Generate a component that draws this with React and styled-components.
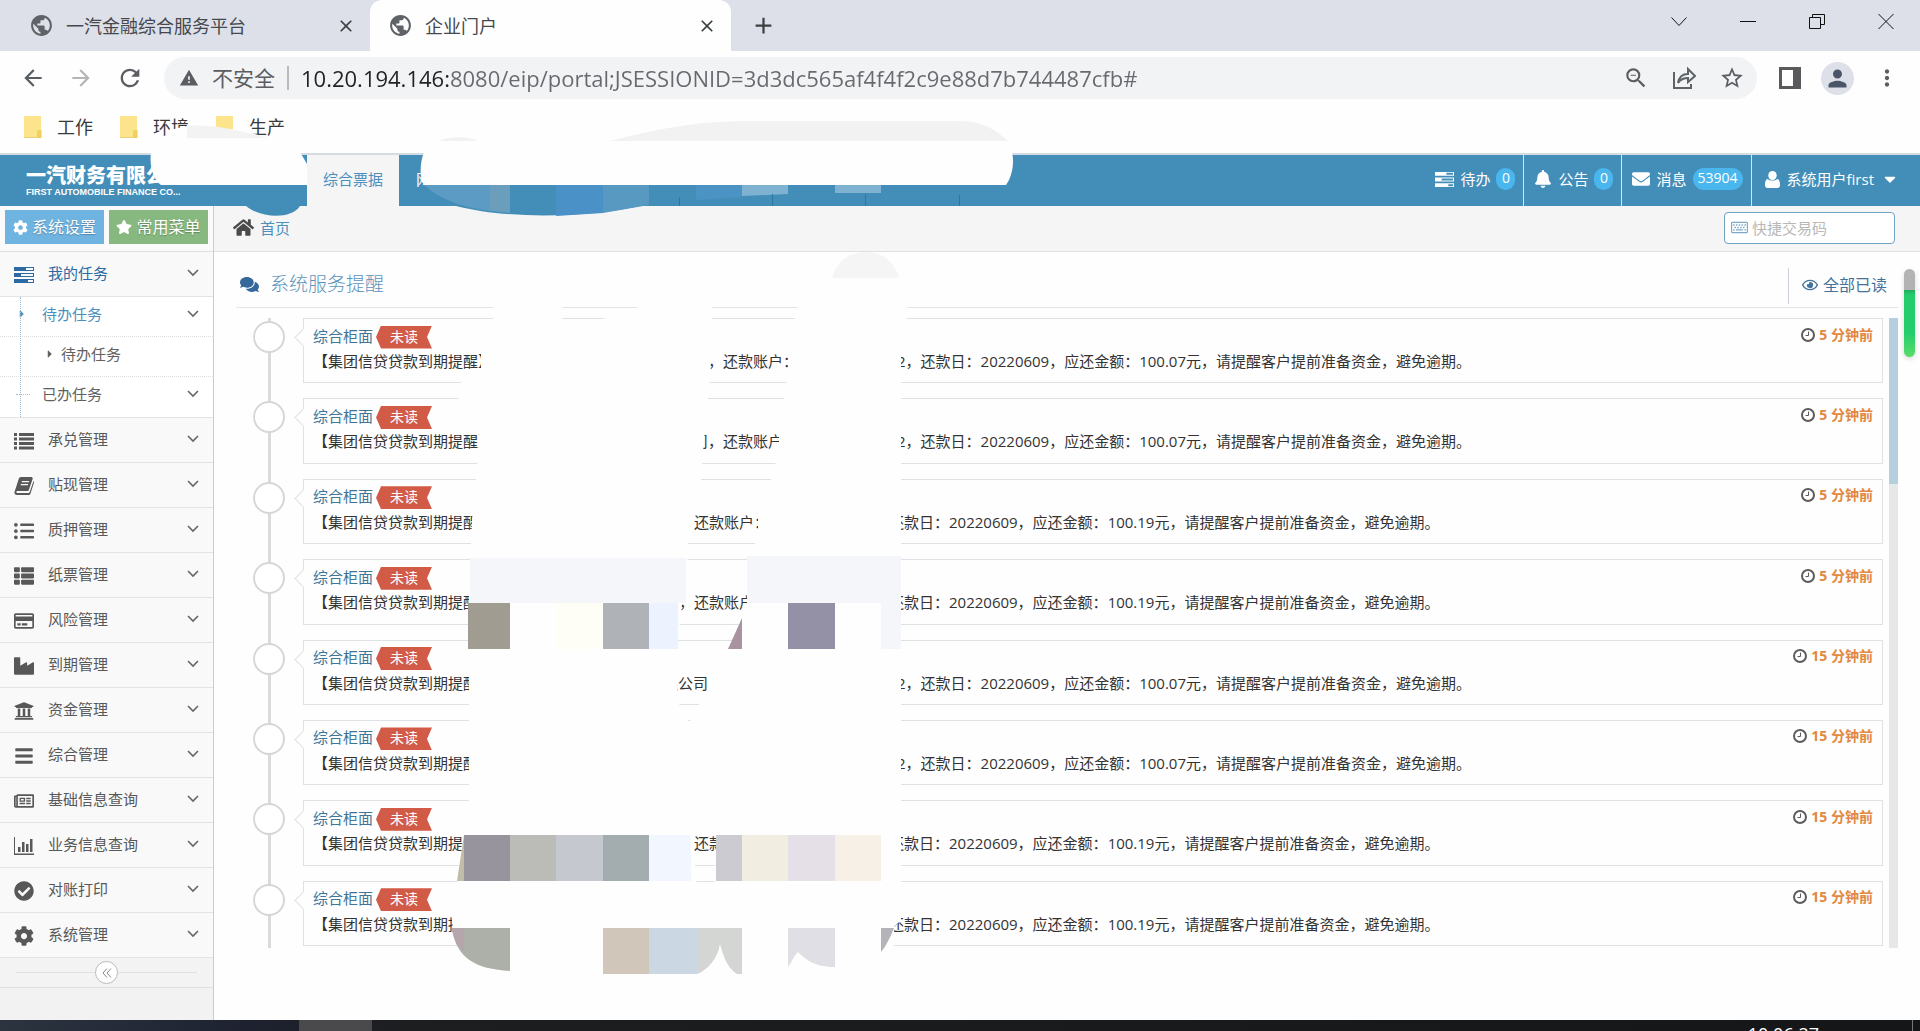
import React from 'react';
import styled, { createGlobalStyle, css } from 'styled-components';
import {
    FaBars, FaBell, FaCaretDown, FaCaretRight, FaCheckCircle, FaCog, FaComments, FaEnvelope,
    FaHome, FaIndustry, FaListUl, FaRegCreditCard, FaRegEye,
    FaRegKeyboard, FaRegNewspaper, FaStar, FaThList, FaUniversity,
} from 'react-icons/fa';
import {
    MdArrowBack, MdArrowForward, MdClose, MdAdd, MdMoreVert, MdPerson, MdPublic, MdRefresh,
    MdStarBorder, MdWarning, MdZoomOut,
} from 'react-icons/md';

const GlobalStyle = createGlobalStyle`
    *, *::before, *::after { box-sizing: border-box; }

    body {
        margin: 0;
        background: #fefefe;
        color: #393939;
        font-family: 'Open Sans', 'Noto Sans CJK SC', sans-serif;
        font-size: 15px;
        line-height: 20px;
    }

    a { color: inherit; text-decoration: none; }
    ul { list-style: none; margin: 0; padding: 0; }
    h1, p { margin: 0; font-weight: 400; }
    svg { display: block; flex-shrink: 0; }

    button {
        border: 0;
        padding: 0;
        background: none;
        color: inherit;
        font: inherit;
    }
`;

const Page = styled.div`
    position: relative;
    display: flex;
    flex-direction: column;
    height: 100vh;
    overflow: hidden;
`;

/* ------------------------------------------------------------ Browser --- */

const TabStrip = styled.div`
    display: flex;
    height: 51px;
    flex-shrink: 0;
    background: #dde0e8;
`;

const Tab = styled.div`
    display: flex;
    align-items: center;
    gap: 12px;
    width: ${props => (props.$active ? 361 : 370)}px;
    padding: 0 14px 0 ${props => (props.$active ? 18 : 29)}px;
    color: #45484d;
    font-size: 18px;
    border-radius: 12px 12px 0 0;
    background: ${props => (props.$active ? '#fefefe' : 'transparent')};

    span { flex: 1; }
    svg { color: #5f6368; }
    button svg { color: #3c4043; }
`;

const NewTab = styled.button`
    margin-left: 19px;
    color: #3c4043;
`;

const WindowButtons = styled.div`
    display: flex;
    align-items: flex-start;
    gap: 53px;
    margin-left: auto;
    padding: 13px 26px 0 0;
`;

const Toolbar = styled.div`
    display: flex;
    align-items: center;
    height: 54px;
    flex-shrink: 0;
    padding: 0 20px;
    color: #5a5d61;
`;

const NavButtons = styled.div`
    display: flex;
    gap: 22px;
    margin-right: 20px;

    button:nth-child(2) { color: #b4b5b7; }
`;

const Omnibox = styled.label`
    display: flex;
    flex: 1;
    align-items: center;
    height: 42px;
    padding: 0 12px 0 15px;
    border-radius: 21px;
    background: #f2f3f5;
    font-size: 22px;
`;

const Insecure = styled.span`
    margin-left: 13px;
    padding-right: 12px;
    border-right: 2px solid #b9bbbe;
    line-height: 24px;
    font-size: 21px;
`;

/* host part dark, rest of the address grey */
const Address = styled.input`
    flex: 1;
    height: 32px;
    margin-left: 12px;
    padding: 0;
    border: 0;
    outline: 0;
    font: inherit;
    background: linear-gradient(90deg, #202124 148px, #66696d 148px);
    background-clip: text;
    -webkit-text-fill-color: transparent;
`;

const OmniActions = styled.span`
    display: flex;
    align-items: center;
    gap: 23px;
`;

const BrowserActions = styled.div`
    display: flex;
    align-items: center;
    gap: 20px;
    margin-left: 22px;
`;

const Avatar = styled.button`
    display: grid;
    place-items: center;
    width: 33px;
    height: 33px;
    border-radius: 50%;
    background: #dde0e8;
    color: #4b5568;
`;

const Bookmarks = styled.nav`
    display: flex;
    gap: 27px;
    height: 50px;
    flex-shrink: 0;
    padding: 11px 24px 0;
    border-bottom: 2px solid #d5dce1;
    font-size: 18px;
    line-height: 22px;

    a {
        display: flex;
        gap: 15px;
    }
`;

const BOOKMARKS = ['工作', '环境', '生产'];

const FolderIcon = () => (
    <svg width="18" height="22" viewBox="0 0 18 22">
        <path d="M0 0h17v14h1v8H0z" fill="#fbe48c" />
        <path d="M14 14h3v8h-4v-7z" fill="#f2cf5e" />
        <path d="M0 21h13v1H0z" fill="#eed074" />
    </svg>
);

const ShareIcon = () => (
    <svg width="24" height="24" viewBox="0 0 24 24" fill="none" stroke="#5f6368" strokeWidth="2">
        <path d="M2 6v16h17v-4" />
        <path d="M6 17c1-6 4-9 10-9V3l7 7-7 6v-4c-5 0-8 2-10 5z" />
    </svg>
);

const SidePanelIcon = () => (
    <svg width="22" height="22" viewBox="0 0 22 22">
        <path d="M0 0h22v22H0zM3 3v16h11V3z" fill="#5a5a5c" fillRule="evenodd" />
    </svg>
);

const WinIcon = ({ d }) => (
    <svg width="16" height="16" viewBox="0 0 16 16" fill="none" stroke="#111" strokeWidth="1">
        <path d={d} />
    </svg>
);

const Browser = () => (
    <>
        <TabStrip>
            <Tab>
                <MdPublic size={25} />
                <span>一汽金融综合服务平台</span>
                <button aria-label="关闭"><MdClose size={20} /></button>
            </Tab>
            <Tab $active>
                <MdPublic size={25} />
                <span>企业门户</span>
                <button aria-label="关闭"><MdClose size={20} /></button>
            </Tab>
            <NewTab aria-label="新标签页"><MdAdd size={27} /></NewTab>
            <WindowButtons>
                <button aria-label="标签搜索"><WinIcon d="M.5 4.5l7.500 8 7.500-8" /></button>
                <button aria-label="最小化"><WinIcon d="M0 8.500h16" /></button>
                <button aria-label="还原"><WinIcon d="M.5 4.500h11v11H.5zM3.500 4V1.500h12v10H12" /></button>
                <button aria-label="关闭窗口"><WinIcon d="M.5 1l15 15M15.500 1l-15 15" /></button>
            </WindowButtons>
        </TabStrip>
        <Toolbar>
            <NavButtons>
                <button aria-label="后退"><MdArrowBack size={26} /></button>
                <button aria-label="前进"><MdArrowForward size={26} /></button>
                <button aria-label="刷新"><MdRefresh size={28} /></button>
            </NavButtons>
            <Omnibox>
                <MdWarning size={20} />
                <Insecure>不安全</Insecure>
                <Address
                    aria-label="地址"
                    defaultValue="10.20.194.146:8080/eip/portal;JSESSIONID=3d3dc565af4f4f2c9e88d7b744487cfb#"
                />
                <OmniActions>
                    <MdZoomOut size={26} />
                    <ShareIcon />
                    <MdStarBorder size={26} />
                </OmniActions>
            </Omnibox>
            <BrowserActions>
                <button aria-label="侧边栏"><SidePanelIcon /></button>
                <Avatar aria-label="用户"><MdPerson size={27} /></Avatar>
                <button aria-label="菜单"><MdMoreVert size={26} /></button>
            </BrowserActions>
        </Toolbar>
        <Bookmarks>
            {BOOKMARKS.map(name => (
                <a key={name} href="#"><FolderIcon />{name}</a>
            ))}
        </Bookmarks>
    </>
);

/* ------------------------------------------------------------- Header --- */

const Header = styled.header`
    display: flex;
    height: 51px;
    flex-shrink: 0;
    background: #438eb9;
    color: #fff;
`;

const Brand = styled.div`
    width: 307px;
    padding: 10px 0 0 26px;
    white-space: nowrap;

    strong {
        display: block;
        font-size: 20px;
        font-weight: 900;
        line-height: 22px;
    }

    small {
        display: block;
        font: bold 9px/10px 'Liberation Sans', sans-serif;
    }
`;

const ModuleTab = styled.a`
    padding: ${props => (props.$active ? '0 16px' : '0 17px')};
    line-height: 49px;
    background: ${props => (props.$active ? '#f5f5f5' : 'transparent')};
    color: ${props => (props.$active ? '#4c8fbd' : '#fff')};
`;

const HeaderLinks = styled.nav`
    display: flex;
    margin-left: auto;
    padding-right: 13px;
`;

const HeaderLink = styled.a`
    display: flex;
    align-items: center;
    gap: 6px;
    padding: 0 8px 3px 10px;
    border-left: 1px solid #d4e5ef;

    &:first-child { border-left: 0; }

    ${props => props.$user && css`
        gap: 7px;
        padding-left: 13px;
    `}
`;

const Count = styled.span`
    min-width: 19px;
    padding: 0 5px 2px;
    border-radius: 11px;
    background: #4ab6ee;
    line-height: 20px;
    text-align: center;
    font-size: 14px;
`;

const TasksIcon = ({ size = 20 }) => (
    <svg width={size} height={size} viewBox="0 0 20 20" fill="currentColor" fillRule="evenodd">
        <path d="M0 2h20v4H0zM12 3v2h7V3zM0 8h20v4H0zM7 9v2h12V9zM0 14h20v4H0zM14 15v2h5v-2z" />
    </svg>
);

const UserIcon = () => (
    <svg width="15" height="17" viewBox="0 0 15 17" fill="currentColor">
        <ellipse cx="7.500" cy="4.500" rx="4.200" ry="4.500" />
        <path d="M3 8c1 2 8 2 9 0 3 0 3 5 3 6 0 2-1 3-2.500 3h-10C1 17 0 16 0 14c0-1 0-6 3-6z" />
    </svg>
);

const TopHeader = () => (
    <Header>
        <Brand>
            <strong>一汽财务有限公司</strong>
            <small>FIRST AUTOMOBILE FINANCE CO...</small>
        </Brand>
        <ModuleTab href="#" $active>综合票据</ModuleTab>
        <ModuleTab href="#">网</ModuleTab>
        <HeaderLinks>
            <HeaderLink href="#"><TasksIcon size={19} />待办<Count>0</Count></HeaderLink>
            <HeaderLink href="#"><FaBell size={18} />公告<Count>0</Count></HeaderLink>
            <HeaderLink href="#"><FaEnvelope size={18} />消息<Count>53904</Count></HeaderLink>
            <HeaderLink href="#" $user><UserIcon />系统用户first<FaCaretDown size={18} /></HeaderLink>
        </HeaderLinks>
    </Header>
);

/* ------------------------------------------------------------ Sidebar --- */

const Body = styled.div`
    display: flex;
    flex: 1;
    min-height: 0;
`;

const Sidebar = styled.aside`
    width: 214px;
    flex-shrink: 0;
    border-right: 1px solid #ccc;
    background: #f2f2f2;
`;

const Shortcuts = styled.div`
    display: flex;
    gap: 5px;
    height: 46px;
    padding: 4px 5px 7px;
    border-bottom: 1px solid #e0e0e0;
    background: #fafafa;
`;

const Shortcut = styled.button`
    display: flex;
    flex: 1;
    align-items: center;
    justify-content: center;
    gap: 4px;
    font-size: 16px;
    white-space: nowrap;
    color: #fff;
    background: ${props => props.$tone};
    text-shadow: 0 1px 1px rgba(0, 0, 0, 0.25);
`;

const MenuLink = styled.a`
    display: flex;
    align-items: center;
    gap: 14px;
    height: 45px;
    padding: 0 14px 3px 14px;
    border-bottom: 1px solid #e3e3e3;
    background: #f9f9f9;
    color: ${props => (props.$open ? '#2b6aa3' : '#585858')};

    span { flex: 1; }
    > svg:first-child { margin-top: 4px; }
`;

const SubMenu = styled.ul`
    position: relative;
    background: #fff;
    border-bottom: 1px solid #e3e3e3;

    &::before {
        content: '';
        position: absolute;
        left: 20px;
        top: 0;
        bottom: 0;
        border-left: 1px dotted #9dbdd6;
    }
`;

const SubLink = styled.a`
    display: flex;
    align-items: center;
    height: 40px;
    padding: 0 14px 6px ${props => (props.$deep ? 44 : 16)}px;
    border-bottom: ${props => (props.$last ? '0' : '1px dotted #dcdcdc')};
    color: ${props => (props.$open ? '#4c8fbd' : '#616161')};

    i {
        display: block;
        width: ${props => (props.$deep ? 17 : 26)}px;
    }

    span { flex: 1; }
`;

const Dash = styled.b`
    display: block;
    width: 14px;
    border-top: 1px dotted #9dbdd6;
`;

const Collapse = styled.div`
    display: flex;
    align-items: center;
    height: 30px;
    padding: 0 16px;
    border-bottom: 1px solid #e0e0e0;
    background: #f3f3f3;

    &::before, &::after {
        content: '';
        flex: 1;
        border-top: 1px solid #e0e0e0;
    }

    button {
        display: grid;
        place-items: center;
        width: 23px;
        height: 23px;
        border: 1px solid #bbb;
        border-radius: 50%;
        background: #fff;
    }
`;

const Chevron = () => (
    <svg width="12" height="8" viewBox="0 0 12 8" fill="none" stroke="#666" strokeWidth="1.600">
        <path d="M1 1l5 5 5-5" />
    </svg>
);

const ListIcon = () => (
    <svg width="20" height="20" viewBox="0 0 20 20" fill="currentColor">
        <path d="M0 2h3v3H0zM5 2h15v3H5zM0 6.500h3v3H0zM5 6.500h15v3H5zM0 11h3v3H0zM5 11h15v3H5zM0 15.500h3v3H0zM5 15.500h15v3H5z" />
    </svg>
);

const BookIcon = () => (
    <svg width="20" height="20" viewBox="0 0 20 20" fill="currentColor" fillRule="evenodd">
        <path d="M7 1h10c1.500 0 2 1 1.600 2L15 13.500c-.3 1-1 1.500-2 1.500H3.500c-1.500 0-1.500 2 0 2H14c1 0 1.500-.5 1.800-1.300L19.500 5c.7.600.5 1.500.3 2.300L16.500 17.500c-.4 1-1 1.500-2 1.500H3c-2 0-3-1.500-2.500-3L4.700 3C5 1.700 6 1 7 1zM8 5l-.4 1.300h7.200L15.200 5zM7 8l-.4 1.300h7.200L14.200 8z" />
    </svg>
);

const ChartIcon = () => (
    <svg width="20" height="20" viewBox="0 0 20 20" fill="currentColor">
        <path d="M0 1h1v16.500h19v1.500H0zM4 11h2.500v5H4zM8 6h2.500v10H8zM12 8h2.500v8H12zM16 3h2.500v13H16z" />
    </svg>
);

const MENU = [
    ['承兑管理', ListIcon],
    ['贴现管理', BookIcon],
    ['质押管理', FaListUl],
    ['纸票管理', FaThList],
    ['风险管理', FaRegCreditCard],
    ['到期管理', FaIndustry],
    ['资金管理', FaUniversity],
    ['综合管理', FaBars],
    ['基础信息查询', FaRegNewspaper],
    ['业务信息查询', ChartIcon],
    ['对账打印', FaCheckCircle],
    ['系统管理', FaCog],
];

const SideMenu = () => (
    <Sidebar>
        <Shortcuts>
            <Shortcut $tone="#6fb3e0"><FaCog size={15} />系统设置</Shortcut>
            <Shortcut $tone="#87b87f"><FaStar size={16} />常用菜单</Shortcut>
        </Shortcuts>
        <MenuLink href="#" $open><TasksIcon /><span>我的任务</span><Chevron /></MenuLink>
        <SubMenu>
            <li><SubLink href="#" $open><i><FaCaretRight size={12} /></i><span>待办任务</span><Chevron /></SubLink></li>
            <li><SubLink href="#" $deep><i><FaCaretRight size={12} /></i><span>待办任务</span></SubLink></li>
            <li><SubLink href="#" $last><i><Dash /></i><span>已办任务</span><Chevron /></SubLink></li>
        </SubMenu>
        {MENU.map(([label, Icon]) => (
            <MenuLink key={label} href="#"><Icon size={20} /><span>{label}</span><Chevron /></MenuLink>
        ))}
        <Collapse>
            <button aria-label="收起菜单">
                <svg width="10" height="10" viewBox="0 0 10 10" fill="none" stroke="#888">
                    <path d="M5 .5L1 5l4 4.500M9 .5L5 5l4 4.500" />
                </svg>
            </button>
        </Collapse>
    </Sidebar>
);

/* ------------------------------------------------------------ Content --- */

const Main = styled.main`
    display: flex;
    flex: 1;
    flex-direction: column;
    min-width: 0;
`;

const Crumbs = styled.div`
    display: flex;
    align-items: center;
    gap: 6px;
    height: 46px;
    flex-shrink: 0;
    padding: 0 25px 2px 19px;
    border-bottom: 1px solid #e0e0e0;
    background: #f5f5f5;
    color: #4c8fbd;

    > svg { color: #4a4a4a; }
`;

const QuickCode = styled.label`
    display: flex;
    align-items: center;
    gap: 4px;
    width: 171px;
    height: 32px;
    margin-left: auto;
    padding: 0 6px;
    border: 1px solid #6fa3c2;
    border-radius: 4px;
    background: #fff;
    color: #7fa9cb;

    input {
        width: 100%;
        min-width: 0;
        border: 0;
        outline: 0;
        padding: 0;
        font: inherit;
    }

    input::placeholder { color: #b8b8b8; }
`;

const Panel = styled.section`
    display: flex;
    flex: 1;
    flex-direction: column;
    min-height: 0;
    padding: 16px 22px 72px;
`;

const PanelHead = styled.div`
    display: flex;
    align-items: center;
    gap: 11px;
    height: 40px;
    flex-shrink: 0;
    padding: 0 11px 7px 4px;
    border-bottom: 1px solid #e3e5e8;
    color: #35679a;

    h1 {
        font-size: 19px;
        line-height: 24px;
        font-weight: 300;
        color: #5c93bb;
    }

    a {
        display: flex;
        align-items: center;
        gap: 5px;
        height: 36px;
        margin: 0 0 -4px auto;
        padding: 0 0 3px 13px;
        border-left: 1px solid #ccd2d8;
        font-size: 16px;
        color: #44729b;
    }
`;

const Scroller = styled.div`
    display: flex;
    flex: 1;
    gap: 6px;
    min-height: 0;
    margin-top: 10px;
`;

const Track = styled.div`
    width: 9px;
    background: linear-gradient(#b5cfdf 166px, #e7e7e7 166px);
`;

const Timeline = styled.ol`
    display: flex;
    flex: 1;
    flex-direction: column;
    gap: 15px;
    margin: 0;
    padding: 0 0 2px 67px;
    list-style: none;
    background: linear-gradient(#dadada, #dadada) 32px 0 / 3px 100% no-repeat;
`;

const Card = styled.li`
    position: relative;
    flex: 1;
    padding: 6px 9px 0;
    border: 1px solid #dfe2e4;
    background: #fefefe;

    &::before {
        content: '';
        position: absolute;
        left: -51px;
        top: 2px;
        width: 32px;
        height: 32px;
        border: 2px solid #d6d6d6;
        border-radius: 50%;
        background: #fff;
    }

    &::after {
        content: '';
        position: absolute;
        left: -7px;
        top: 12px;
        width: 13px;
        height: 13px;
        border: solid #dfe2e4;
        border-width: 0 0 1px 1px;
        background: #fefefe;
        transform: rotate(45deg);
    }
`;

const CardHead = styled.div`
    display: flex;
    align-items: center;
    gap: 3px;
    height: 24px;

    > a {
        padding-bottom: 3px;
        color: #3f7599;
    }
`;

const Ribbon = styled.span`
    width: 56px;
    height: 23px;
    color: #fff;
    font-size: 14px;
    line-height: 21px;
    text-align: center;
    background: #d15b47;
    clip-path: polygon(0 50%, 5px 0, 100% 0, 51px 50%, 100% 100%, 5px 100%);
`;

const Ago = styled.time`
    display: flex;
    align-items: center;
    gap: 4px;
    margin: -5px 0 0 auto;
    font-size: 14px;
    font-weight: 700;
    color: #e2883f;
`;

const ClockIcon = () => (
    <svg width="14" height="14" viewBox="0 0 14 14" fill="none" stroke="#5c5c5c">
        <circle cx="7" cy="7" r="6" strokeWidth="2" />
        <path d="M7.500 3.500v4H4.500" />
    </svg>
);

const Message = styled.p`
    display: flex;
    height: 24px;
    line-height: 24px;
    white-space: nowrap;
    color: #333;
`;

const Subject = styled.span`
    display: flex;
    justify-content: space-between;
    width: ${props => (props.$short ? 456 : 485)}px;
    margin-right: ${props => (props.$short ? 120 : 99)}px;
`;

const NOTICES = [
    { account: '，还款账户：', amount: '100.07', ago: 5 },
    { account: '司，还款账户：', amount: '100.07', ago: 5 },
    { account: '，还款账户：', amount: '100.19', ago: 5, short: true },
    { account: '，还款账户：', amount: '100.19', ago: 5, short: true },
    { account: '限公司，还款账户：', amount: '100.07', ago: 15 },
    { account: '', amount: '100.07', ago: 15 },
    { account: '，还款账户：', amount: '100.19', ago: 15, short: true },
    { account: '', amount: '100.19', ago: 15, short: true },
];

const Notice = ({ account, amount, ago, short }) => (
    <Card>
        <CardHead>
            <a href="#">综合柜面</a>
            <Ribbon>未读</Ribbon>
            <Ago><ClockIcon />{ago} 分钟前</Ago>
        </CardHead>
        <Message>
            <Subject $short={short}>
                <span>【集团信贷贷款到期提醒】</span>
                <span>{account}</span>
            </Subject>
            {short ? '' : '2，'}还款日：20220609，应还金额：{amount}元，请提醒客户提前准备资金，避免逾期。
        </Message>
    </Card>
);

const Content = () => (
    <Main>
        <Crumbs>
            <FaHome size={21} />
            <a href="#">首页</a>
            <QuickCode>
                <FaRegKeyboard size={17} />
                <input aria-label="快捷交易码" placeholder="快捷交易码" />
            </QuickCode>
        </Crumbs>
        <Panel>
            <PanelHead>
                <FaComments size={19} />
                <h1>系统服务提醒</h1>
                <a href="#"><FaRegEye size={16} />全部已读</a>
            </PanelHead>
            <Scroller>
                <Timeline>
                    {NOTICES.map((notice, i) => <Notice key={i} {...notice} />)}
                </Timeline>
                <Track />
            </Scroller>
        </Panel>
    </Main>
);

/* ------------------------------------------------------------ Overlay --- */

const PageGauge = styled.div`
    position: absolute;
    top: 269px;
    right: 5px;
    width: 11px;
    height: 88px;
    border-radius: 6px;
    background: linear-gradient(#b3b3b3 21px, #1fae5c 21px, #24cc6c 26px, #24cc6c 64px, #5bdd6a);
    box-shadow: 0 2px 5px rgba(0, 0, 0, 0.15);
`;

const BrushLayer = styled.svg`
    position: absolute;
    left: 0;
    top: 0;
    pointer-events: none;
`;

const TILES = [
    // x, y, width, height, fill
    [470, 558, 216, 45, '#f5f6fa'],
    [747, 556, 154, 47, '#f5f6fa'],
    [468, 603, 42, 46, '#a09c91'],
    [556, 603, 47, 46, '#fffef6'],
    [603, 603, 46, 46, '#afb3b7'],
    [649, 603, 29, 46, '#edf3fe'],
    [788, 603, 47, 46, '#9490a6'],
    [881, 603, 20, 46, '#f5f6fa'],
    [464, 835, 46, 46, '#97949e'],
    [510, 835, 46, 46, '#bbbbb7'],
    [556, 835, 47, 46, '#c5c9cf'],
    [603, 835, 46, 46, '#a3acae'],
    [649, 835, 42, 46, '#f2f7ff'],
    [716, 835, 26, 46, '#cdcbd2'],
    [742, 835, 46, 46, '#f1eee1'],
    [788, 835, 47, 46, '#e5e0e7'],
    [835, 835, 46, 46, '#f6f0e6'],
    [603, 928, 46, 46, '#d0c6b9'],
    [649, 928, 48, 46, '#cbd7e2'],
];

const Brush = () => (
    <BrushLayer width="1920" height="1020" viewBox="0 0 1920 1020" aria-hidden="true">
        {/* bookmark and header strokes */}
        <path d="M170 130L187 126L240 130L262 136H310V152H150L168 140z" fill="#fefefe" />
        <path d="M187 126C215 124 235 130 268 138H187z" fill="#f3f3f3" />
        <path d="M151 152H300L307 164V185H161C154 180 149 168 151 152z" fill="#fefefe" />
        <path d="M246 206H300C292 219 262 219 246 206z" fill="#438eb9" />
        <path d="M440 141C448 136 468 136 478 141zM610 141C670 126 700 121 760 121H960C985 121 998 132 1008 141z" fill="#f2f2f2" />
        <path d="M424 185H649V206H640C590 217 510 220 456 206C440 202 430 195 424 185z" fill="#438eb9" />
        <path d="M424 185H510V213C485 211 448 207 424 185z" fill="#5b9bc4" />
        <path d="M490 185H510V213L490 210z" fill="#6b9dbd" />
        <path d="M556 185H603V213L556 216z" fill="#4a91c8" />
        <path d="M603 185H649V205L603 213z" fill="#5799c1" />
        <path d="M696 185H742V197L696 200z" fill="#4a93c3" />
        <path d="M742 185H788V194L742 196zM835 185H881V193H835z" fill="#7fb1d1" />
        <path d="M679.500 197V206M772.500 194V206M865.500 194V206M959.500 195V206" stroke="#2f769f" fill="none" />
        <path d="M424 152H1012C1015 165 1011 178 1006 185H424C419 177 420 162 424 152z" fill="#fefefe" />
        <path d="M832 278C838 258 852 252 866 252C882 252 895 262 899 278z" fill="#f5f5f5" />

        {/* strokes across the list */}
        <path
            d="M494 300H562V320H598L637 311V300H712V340L710 380L704 440L700 492L688 540V556L680 620L677 650
               V700L690 725L694 760V850L697 892H457V881L464 835L469 800V590L472 520L477 470L480 420L458 400
               L461 382L481 372V345L493 320z"
            fill="#fefefe"
        />
        <path
            d="M800 300H908L906 325L901 345V920L893 928L881 952L720 960L714 892L717 835H694V725H688L700 703
               L709 690V665L728 649L747 610V570L752 560L758 530V505L768 492L779 450V425L784 398L788 372V345z"
            fill="#fefefe"
        />
        <path d="M464 882H894V976H530L500 972C470 968 456 950 452 920z" fill="#fefefe" />
        {TILES.map(([x, y, w, h, fill]) => (
            <rect key={`${x}-${y}`} x={x} y={y} width={w} height={h} fill={fill} />
        ))}
        <path d="M728 649L742 618V649z" fill="#a8939f" />
        <path d="M457 881L464 835V881z" fill="#c2bda9" />
        <path d="M452 928H510V971C475 969 456 958 452 928z" fill="#adafa9" />
        <path d="M452 928H464V951C456 944 453 938 452 928z" fill="#b5a6ae" />
        <path d="M697 928H742V974H737C727 968 723 955 720 944C718 958 708 970 697 974z" fill="#d4d6d4" />
        <path d="M788 928H835V967C815 967 806 960 798 952C793 957 792 962 788 967z" fill="#e1dfe6" />
        <path d="M881 928H894C890 938 886 946 881 952z" fill="#b5b3ba" />
    </BrushLayer>
);

/* ------------------------------------------------------------ Taskbar --- */

const Taskbar = styled.footer`
    display: flex;
    justify-content: space-between;
    height: 11px;
    flex-shrink: 0;
    overflow: hidden;
    padding: 0 7px 0 299px;
    background: linear-gradient(90deg, #2c3440, #1e2230 250px, #1d1e20 400px, #151618);
`;

const RunningApp = styled.button`
    width: 73px;
    background: #4a4a4d;
`;

const Clock = styled.time`
    height: 30px;
    padding: 4px 93px 0 0;
    border-right: 1px solid #77787a;
    font-size: 18px;
    line-height: 20px;
    color: #fff;
`;

const App = () => (
    <Page>
        <GlobalStyle />
        <Browser />
        <TopHeader />
        <Body>
            <SideMenu />
            <Content />
        </Body>
        <Taskbar>
            <RunningApp aria-label="浏览器" />
            <Clock>10:06:27</Clock>
        </Taskbar>
        <Brush />
        <PageGauge />
    </Page>
);

export default App;
